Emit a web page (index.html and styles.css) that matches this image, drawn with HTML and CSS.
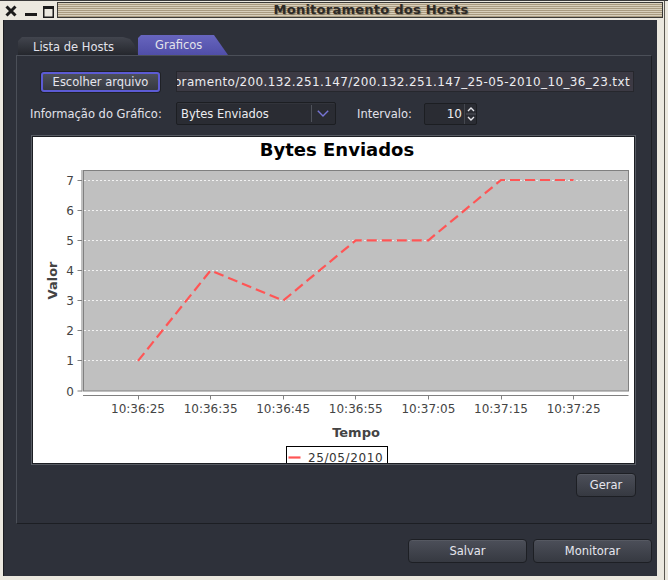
FILE: index.html
```html
<!DOCTYPE html>
<html>
<head>
<meta charset="utf-8">
<link rel="stylesheet" href="styles.css">
</head>
<body>
<div class="window">
  <div class="titlebar">
    <svg class="ctrls" width="57" height="20" viewBox="0 0 57 20">
      <path d="M6.5 6.5 L15.5 15.5 M15.5 6.5 L6.5 15.5" stroke="#1b1b1b" stroke-width="3" fill="none"/>
      <rect x="25" y="13" width="12" height="3" fill="#1b1b1b"/>
      <rect x="43.75" y="6.75" width="9.5" height="10.5" stroke="#1b1b1b" stroke-width="1.5" fill="none"/>
      <rect x="43" y="6" width="11" height="3" fill="#1b1b1b"/>
    </svg>
    <div class="title-strip"><span class="title">Monitoramento dos Hosts</span></div>
  </div>
  <div class="content">
    <div class="tabs">
      <div class="tab tab-inactive">Lista de Hosts</div>
      <div class="tab tab-active">Graficos</div>
    </div>
    <div class="panel">
      <div class="row row1">
        <button class="btn btn-choose">Escolher arquivo</button>
        <div class="textfield"><span class="tf-text">Monitoramento/200.132.251.147/200.132.251.147_25-05-2010_10_36_23.txt</span></div>
      </div>
      <div class="row row2">
        <span class="label label-info">Informação do Gráfico:</span>
        <div class="combo">
          <span class="combo-text">Bytes Enviados</span>
          <span class="combo-arrow">
            <svg width="12" height="7" viewBox="0 0 12 7"><path d="M0.8 0.8 L6 6 L11.2 0.8" stroke="#7775d6" stroke-width="1.4" fill="none"/></svg>
          </span>
        </div>
        <span class="label label-int">Intervalo:</span>
        <div class="spinner">
          <span class="spin-val">10</span>
          <span class="spin-btns">
            <svg width="10" height="20" viewBox="0 0 10 20">
              <path d="M2 7 L5 4 L8 7" stroke="#e4e4ea" stroke-width="1.4" fill="none"/>
              <line x1="0" y1="10" x2="10" y2="10" stroke="#50535c" stroke-width="1"/>
              <path d="M2 13 L5 16 L8 13" stroke="#e4e4ea" stroke-width="1.4" fill="none"/>
            </svg>
          </span>
        </div>
      </div>
      <div class="chart">
        <svg class="chart-svg" width="601" height="326" viewBox="0 0 601 326">
          <text class="c-title" x="304" y="19" text-anchor="middle">Bytes Enviados</text>
          <rect x="50.5" y="33.5" width="545" height="220.5" fill="#c0c0c0" stroke="#808080" stroke-width="1"/>
          <g class="grid" stroke="#f2f2f2" stroke-width="1" stroke-dasharray="2 2">
            <line x1="51" y1="223.5" x2="595" y2="223.5"/>
            <line x1="51" y1="193.5" x2="595" y2="193.5"/>
            <line x1="51" y1="163.5" x2="595" y2="163.5"/>
            <line x1="51" y1="133.5" x2="595" y2="133.5"/>
            <line x1="51" y1="103.5" x2="595" y2="103.5"/>
            <line x1="51" y1="73.5" x2="595" y2="73.5"/>
            <line x1="51" y1="43.5" x2="595" y2="43.5"/>
          </g>
          <g stroke="#808080" stroke-width="1">
            <line x1="49" y1="33" x2="49" y2="254.5"/>
            <line x1="44.5" y1="254" x2="49" y2="254"/>
            <line x1="44.5" y1="223.5" x2="49" y2="223.5"/>
            <line x1="44.5" y1="193.5" x2="49" y2="193.5"/>
            <line x1="44.5" y1="163.5" x2="49" y2="163.5"/>
            <line x1="44.5" y1="133.5" x2="49" y2="133.5"/>
            <line x1="44.5" y1="103.5" x2="49" y2="103.5"/>
            <line x1="44.5" y1="73.5" x2="49" y2="73.5"/>
            <line x1="44.5" y1="43.5" x2="49" y2="43.5"/>
            <line x1="50" y1="258.5" x2="595.5" y2="258.5"/>
            <line x1="105.5" y1="258.5" x2="105.5" y2="262.5"/>
            <line x1="177.5" y1="258.5" x2="177.5" y2="262.5"/>
            <line x1="250.5" y1="258.5" x2="250.5" y2="262.5"/>
            <line x1="322.5" y1="258.5" x2="322.5" y2="262.5"/>
            <line x1="395.5" y1="258.5" x2="395.5" y2="262.5"/>
            <line x1="468.5" y1="258.5" x2="468.5" y2="262.5"/>
            <line x1="540.5" y1="258.5" x2="540.5" y2="262.5"/>
          </g>
          <g class="c-tick" text-anchor="end">
            <text x="41" y="258.5">0</text>
            <text x="41" y="228">1</text>
            <text x="41" y="198">2</text>
            <text x="41" y="168">3</text>
            <text x="41" y="138">4</text>
            <text x="41" y="108">5</text>
            <text x="41" y="78">6</text>
            <text x="41" y="48">7</text>
          </g>
          <g class="c-tick" text-anchor="middle">
            <text x="105" y="275.5">10:36:25</text>
            <text x="177.6" y="275.5">10:36:35</text>
            <text x="250.2" y="275.5">10:36:45</text>
            <text x="322.8" y="275.5">10:36:55</text>
            <text x="395.4" y="275.5">10:37:05</text>
            <text x="468" y="275.5">10:37:15</text>
            <text x="540.6" y="275.5">10:37:25</text>
          </g>
          <text class="c-axis" transform="translate(23.5,143.5) rotate(-90)" text-anchor="middle">Valor</text>
          <text class="c-axis" x="323" y="299.5" text-anchor="middle">Tempo</text>
          <polyline points="105,223.9 177.6,133.4 250.2,163.6 322.8,103.3 395.4,103.3 468,43 540.6,43" fill="none" stroke="#ff5555" stroke-width="2.2" stroke-dasharray="10 5"/>
          <rect x="253.5" y="309.5" width="101" height="30" fill="#ffffff" stroke="#000000" stroke-width="1"/>
          <line x1="255.5" y1="320.5" x2="267.5" y2="320.5" stroke="#ff5555" stroke-width="2.2"/>
          <text class="c-legend" x="275" y="325.3">25/05/2010</text>
        </svg>
      </div>
      <div class="row row-gerar">
        <button class="btn btn-gerar">Gerar</button>
      </div>
    </div>
    <div class="footer">
      <button class="btn btn-big">Salvar</button>
      <button class="btn btn-big">Monitorar</button>
    </div>
  </div>
</div>
</body>
</html>
```

FILE: styles.css
```css
html, body {
  margin: 0;
  padding: 0;
}

body {
  background: #ebe8df;
  font-family: "DejaVu Sans", "Noto Sans", sans-serif;
  font-size: 11.5px;
  color: #e4e4ea;
}

.window {
  width: 668px;
  height: 580px;
  box-sizing: border-box;
  display: flex;
  flex-direction: column;
  background: #ebe8df;
  box-shadow: inset 0 1px 0 #3a3a3a, inset -3px 0 0 #ebe8df, inset -4px 0 0 #5a5750;
}

.titlebar {
  height: 20px;
  display: flex;
  flex-shrink: 0;
}

.ctrls {
  display: block;
  flex-shrink: 0;
}

.title-strip {
  flex: 1;
  margin: 2px 5px 2px 0;
  height: 16px;
  box-sizing: border-box;
  border: 1px solid #3b3a36;
  background: repeating-linear-gradient(to bottom, #d8cfbb 0, #d8cfbb 1px, #a99b80 1px, #a99b80 2px);
  display: flex;
  align-items: center;
  justify-content: center;
  padding-left: 22px;
}

.title {
  font-weight: bold;
  font-size: 13px;
  color: #2c2a27;
  letter-spacing: 0.25px;
  text-shadow: 1px 1px 1px rgba(120, 105, 80, 0.8);
  line-height: 14px;
}

.content {
  flex: 1;
  margin: 0 11px 4px 3px;
  border-left: 1px solid #1b1c20;
  background: #2e313a;
  display: flex;
  flex-direction: column;
  padding-top: 15px;
  box-sizing: border-box;
}

.tabs {
  display: flex;
  align-items: flex-end;
  height: 20px;
  margin-left: 14px;
}

.tab {
  box-sizing: border-box;
  display: flex;
  align-items: center;
  color: #e2e2ea;
  font-size: 11.5px;
}

.tab-inactive {
  width: 120px;
  height: 18px;
  padding-left: 15px;
  padding-top: 1px;
  background: linear-gradient(#42454e, #25272d);
  clip-path: polygon(0 100%, 0 4px, 4px 0, calc(100% - 15px) 0, calc(100% - 8px) 2px, calc(100% - 4px) 7px, 100% 100%);
}

.tab-active {
  width: 90px;
  height: 20px;
  padding-left: 17px;
  padding-bottom: 1px;
  background: linear-gradient(#6765be, #504ea8);
  clip-path: polygon(0 100%, 0 3px, 3px 0, calc(100% - 14px) 0, 100% 100%);
}

.panel {
  margin-left: 12px;
  width: 636px;
  height: 469px;
  box-sizing: border-box;
  border: 1px solid;
  border-color: #4b4f58 #1c1e23 #1c1e23 #4b4f58;
  padding: 15px 15px 0 13px;
  display: flex;
  flex-direction: column;
}

.row {
  display: flex;
  align-items: center;
}

.row1 {
  height: 21px;
}

.btn {
  font-family: "DejaVu Sans", "Noto Sans", sans-serif;
  font-size: 11.5px;
  color: #e6e6ee;
  background: linear-gradient(#4c4f59, #363941);
  border: 1px solid #1d1f24;
  border-radius: 4px;
  padding: 0;
  margin: 0;
  box-sizing: border-box;
  box-shadow: inset 0 1px 0 rgba(255, 255, 255, 0.06);
}

.btn-choose {
  margin-left: 11px;
  width: 119px;
  height: 20px;
  border: 2px solid #5c5bd4;
  border-radius: 3px;
  box-shadow: 0 0 0 1px #1f2126;
}

.textfield {
  margin-left: 16px;
  width: 458px;
  height: 21px;
  box-sizing: border-box;
  background: #3c3a44;
  border: 1px solid #26272d;
  display: flex;
  justify-content: flex-end;
  align-items: center;
  overflow: hidden;
  padding-right: 3px;
}

.tf-text {
  white-space: nowrap;
  flex-shrink: 0;
  color: #ececf0;
  font-size: 12px;
  letter-spacing: 0.37px;
}

.row2 {
  margin-top: 10px;
  height: 23px;
}

.label {
  color: #e2e2ea;
  white-space: nowrap;
}

.label-info {
  width: 146px;
}

.combo {
  width: 160px;
  height: 23px;
  box-sizing: border-box;
  background: #2a2c33;
  border: 1px solid #1c1e22;
  border-radius: 2px;
  display: flex;
  align-items: stretch;
  box-shadow: inset 0 1px 0 rgba(255, 255, 255, 0.04);
}

.combo-text {
  flex: 1;
  display: flex;
  align-items: center;
  padding-left: 4px;
  color: #ececf0;
}

.combo-arrow {
  width: 22px;
  margin: 2px 0;
  border-left: 1px solid #4f525b;
  display: flex;
  align-items: center;
  justify-content: center;
  padding-right: 1px;
}

.combo-arrow svg {
  display: block;
}

.label-int {
  margin-left: 21px;
  width: 67px;
}

.spinner {
  width: 53px;
  height: 22px;
  box-sizing: border-box;
  background: #2a2c33;
  border: 1px solid #1c1e22;
  border-radius: 2px;
  display: flex;
  align-items: stretch;
}

.spin-val {
  flex: 1;
  display: flex;
  align-items: center;
  justify-content: flex-end;
  padding-right: 2px;
  color: #ececf0;
  font-size: 12px;
}

.spin-btns {
  width: 11px;
  display: flex;
  align-items: center;
  justify-content: center;
  border-left: 1px solid #45484f;
}

.spin-btns svg {
  display: block;
}

.chart {
  margin-top: 10px;
  margin-left: 1px;
  width: 605px;
  height: 330px;
  box-sizing: border-box;
  border: 1px solid #575b63;
  box-shadow: inset 0 0 0 1px #1c1e23;
  padding: 1px;
  background: #ffffff;
  background-clip: content-box;
}

.chart-svg {
  display: block;
  overflow: hidden;
}

.c-title {
  font-family: "DejaVu Sans", sans-serif;
  font-weight: bold;
  font-size: 18px;
  fill: #000000;
}

.c-tick {
  font-family: "DejaVu Sans", sans-serif;
  font-size: 12px;
  fill: #444444;
}

.c-axis {
  font-family: "DejaVu Sans", sans-serif;
  font-weight: bold;
  font-size: 13px;
  fill: #444444;
}

.c-legend {
  font-family: "DejaVu Sans", sans-serif;
  font-size: 12px;
  fill: #333333;
  letter-spacing: 0.6px;
}

.row-gerar {
  margin-top: 8px;
  justify-content: flex-end;
}

.btn-gerar {
  width: 60px;
  height: 24px;
}

.footer {
  display: flex;
  justify-content: flex-end;
  gap: 6px;
  margin-top: 15px;
  margin-right: 5px;
}

.btn-big {
  width: 119px;
  height: 24px;
}
```
